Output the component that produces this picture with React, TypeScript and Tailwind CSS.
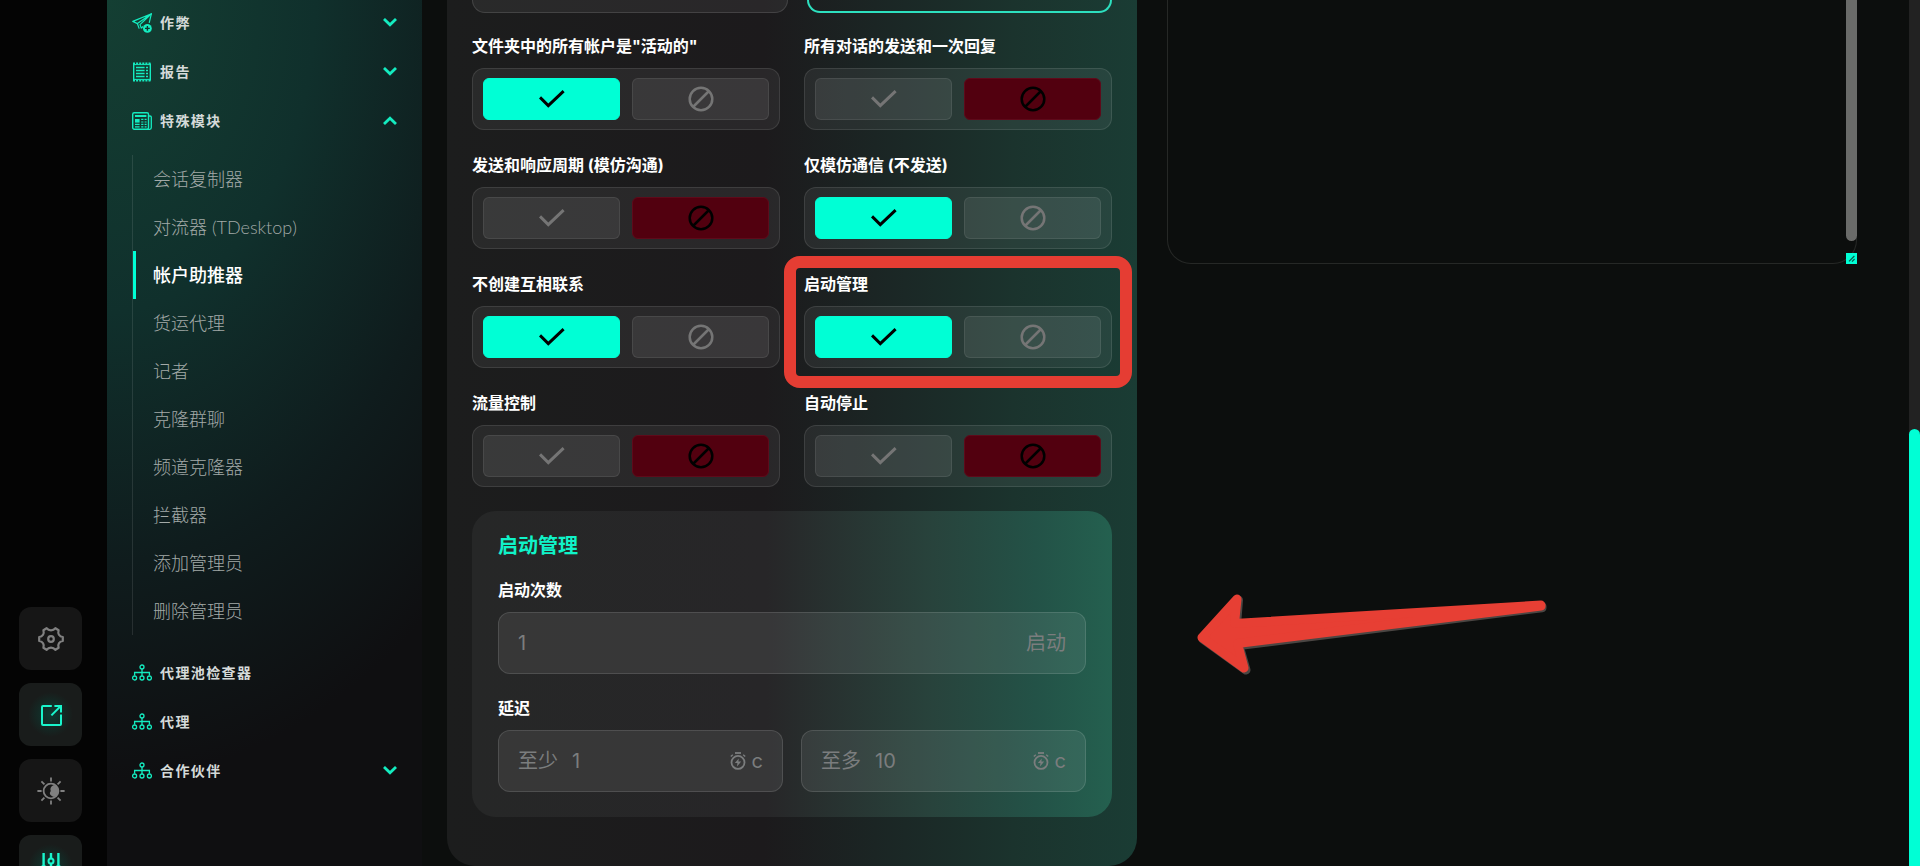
import { useState, type ReactNode } from 'react';
import clsx from 'clsx';

type IconProps = { className?: string };

function PlaneIcon() {
  return (
    <svg className="w-5 h-5" viewBox="0 0 20 20" fill="none" stroke="currentColor" strokeWidth="1.2" strokeLinejoin="round">
      <path d="M19.4 0.7 L0.8 8.4 L5.4 10.6 L19.4 0.7 L8 11.6 L9.4 15.4 M9.4 15.4 L11 13.4" />
      <path d="M19.4 0.7 L17.2 9.8 M5.4 10.6 L7.2 15.6" />
      <circle cx="15.4" cy="15.4" r="4.4" fill="currentColor" stroke="none" />
      <path d="M15.4 13 V17.8 M13 15.4 H17.8" stroke="#10352e" strokeWidth="1.4" />
    </svg>
  );
}

function ReportIcon() {
  return (
    <svg className="w-5 h-5" viewBox="0 0 20 20" fill="none" stroke="currentColor">
      <path d="M1.7 1.5 V18.5 M18.3 1.5 V18.5" strokeWidth="1.4" />
      <path d="M1 1.4 H19 M1 18.6 H19" strokeWidth="1.6" strokeDasharray="2 1.1" />
      <path d="M2 2.6 H18 M2 17.4 H18" strokeWidth="1" />
      <path d="M4 5.5 H12.6 M4 8.5 H12.6 M4 11.5 H12.6 M4 14.5 H12.6" strokeWidth="1.4" />
      <path d="M14 5.5 H16 M14 8.5 H16 M14 11.5 H16 M14 14.5 H16" strokeWidth="1.4" />
    </svg>
  );
}

function NewsIcon() {
  return (
    <svg className="w-5 h-5" viewBox="0 0 20 20" fill="none" stroke="currentColor">
      <rect x="0.7" y="1.7" width="15.8" height="16.6" rx="1.5" strokeWidth="1.4" />
      <path d="M16.5 5 H18 Q19.3 5 19.3 6 V16.6 Q19.3 18.3 17.8 18.3 H15" strokeWidth="1.3" />
      <path d="M3 5 H14.4" strokeWidth="2" />
      <rect x="3" y="8" width="4.6" height="3.6" fill="currentColor" stroke="none" />
      <path d="M9.2 8.4 H11.4 M12.6 8.4 H14.6 M9.2 11 H11.4 M12.6 11 H14.6" strokeWidth="1.2" />
      <path d="M3 13.4 H7.6 M9.2 13.4 H11.4 M12.6 13.4 H14.6 M3 15.8 H7.6 M9.2 15.8 H11.4 M12.6 15.8 H14.6" strokeWidth="1.2" />
    </svg>
  );
}

function ProxyIcon() {
  return (
    <svg className="w-5 h-5" viewBox="0 0 20 20" fill="none" stroke="currentColor" strokeWidth="1.3">
      <circle cx="10" cy="4" r="2" />
      <circle cx="2.6" cy="15" r="2" />
      <circle cx="10" cy="15" r="2" />
      <circle cx="17.4" cy="15" r="2" />
      <path d="M10 6 V13 M2.6 12.4 V9.5 H17.4 V12.4" />
    </svg>
  );
}

function Chevron({ up }: { up?: boolean }) {
  return (
    <svg className={clsx('w-[14px] h-[9px]', up && 'rotate-180')} viewBox="0 0 14 9" fill="none" stroke="currentColor" strokeWidth="2.8">
      <path d="M1 1 L7 6.8 L13 1" />
    </svg>
  );
}

function CheckIcon({ className }: IconProps) {
  return (
    <svg className={clsx('w-[26px] h-[18px]', className)} viewBox="0 0 26 18" fill="none" stroke="currentColor" strokeWidth="3">
      <path d="M1 7.4 L9.3 15.6 L24.6 1.2" />
    </svg>
  );
}

function BanIcon({ className }: IconProps) {
  return (
    <svg className={clsx('w-[26px] h-[26px]', className)} viewBox="0 0 26 26" fill="none" stroke="currentColor" strokeWidth="2.5">
      <circle cx="13" cy="13" r="11.3" />
      <path d="M5 21 L21 5" />
    </svg>
  );
}

function StopwatchIcon() {
  return (
    <svg className="w-4 h-[18px]" viewBox="0 0 16 18" fill="none" stroke="currentColor">
      <circle cx="8" cy="10.4" r="6.5" strokeWidth="1.8" />
      <path d="M5 1 H11" strokeWidth="1.8" />
      <path d="M0.8 4.6 L2.8 2.8 M15.2 4.6 L13.2 2.8" strokeWidth="1.4" />
      <path d="M8.8 6.4 L4.8 11 H7.4 L7 14.4 L11.2 9.6 H8.4 Z" fill="currentColor" stroke="none" />
    </svg>
  );
}

function GearIcon() {
  return (
    <svg className="w-[26px] h-[26px]" viewBox="0 0 26 26" fill="none" stroke="currentColor" strokeWidth="2.2" strokeLinejoin="round">
      <path d="M8.6 2.2 Q10.2 4.4 13 4.4 Q15.8 4.4 17.4 2.2 L20.6 4.2 Q19.8 7 21 8.8 Q22.2 10.8 24.8 11 V15 Q22.2 15.2 21 17.2 Q19.8 19 20.6 21.8 L17.4 23.8 Q15.8 21.6 13 21.6 Q10.2 21.6 8.6 23.8 L5.4 21.8 Q6.2 19 5 17.2 Q3.8 15.2 1.2 15 V11 Q3.8 10.8 5 8.8 Q6.2 7 5.4 4.2 Z" />
      <circle cx="13" cy="13" r="2.8" />
    </svg>
  );
}

function ShareIcon() {
  return (
    <svg className="w-[22px] h-[22px]" viewBox="0 0 22 22" fill="none" stroke="currentColor" strokeWidth="2">
      <path d="M11.8 2 H3 Q2 2 2 3 V20 Q2 21 3 21 H20 Q21 21 21 20 V10.6" />
      <path d="M11.4 11.4 L20 2.8 M14.4 2 H21 V8.4" />
    </svg>
  );
}

function ThemeIcon() {
  return (
    <svg className="w-7 h-7" viewBox="0 0 28 28" fill="none" stroke="currentColor" strokeWidth="1.8">
      <circle cx="14" cy="14" r="7.4" />
      <path d="M17 8 A6.4 6.4 0 0 1 17 20 Q12.8 18.6 12.8 16 Q14.4 14 13.4 12.2 Q13.4 9.6 17 8 Z" fill="currentColor" stroke="none" />
      <path d="M14 0.4 V4.6 M14 23.4 V27.6 M0.4 14 H4.6 M23.4 14 H27.6 M4.4 4.4 L7.4 7.4 M20.6 20.6 L23.6 23.6 M4.4 23.6 L7.4 20.6 M20.6 7.4 L23.6 4.4" />
    </svg>
  );
}

function SlidersIcon() {
  return (
    <svg className="w-5 h-7" viewBox="0 0 20 28" fill="none" stroke="currentColor" strokeWidth="2.4">
      <path d="M2.6 0 V13 M10 0 V5 M17.4 0 V13 M2.6 19 V28 M10 11 V28 M17.4 19 V28" />
      <circle cx="10" cy="8" r="2.5" strokeWidth="2" />
      <circle cx="2.6" cy="15" r="2" strokeWidth="2" />
      <circle cx="17.4" cy="15" r="2" strokeWidth="2" />
    </svg>
  );
}

const railButtons = [
  { label: '设置', icon: <GearIcon />, active: false },
  { label: '打开', icon: <ShareIcon />, active: true },
  { label: '主题', icon: <ThemeIcon />, active: false },
  { label: '调整', icon: <SlidersIcon />, active: true },
];

const subItems = [
  '会话复制器',
  '对流器 (TDesktop)',
  '帐户助推器',
  '货运代理',
  '记者',
  '克隆群聊',
  '频道克隆器',
  '拦截器',
  '添加管理员',
  '删除管理员',
];

const options = [
  { label: '文件夹中的所有帐户是"活动的"', on: true },
  { label: '所有对话的发送和一次回复', on: false },
  { label: '发送和响应周期 (模仿沟通)', on: false },
  { label: '仅模仿通信 (不发送)', on: true },
  { label: '不创建互相联系', on: true },
  { label: '启动管理', on: true, highlight: true },
  { label: '流量控制', on: false },
  { label: '自动停止', on: false },
];

function Group({ icon, label, arrow }: { icon: ReactNode; label: string; arrow?: 'up' | 'down' }) {
  return (
    <button className="flex w-full h-[49px] items-center gap-2 pl-[25px] pr-[25px] text-[#14ecc0]">
      {icon}
      <span className="text-sm font-bold tracking-widest text-[#d5dad9]">{label}</span>
      {arrow && (
        <span className="ml-auto">
          <Chevron up={arrow === 'up'} />
        </span>
      )}
    </button>
  );
}

function Toggle({ label, on, highlight }: { label: string; on: boolean; highlight?: boolean }) {
  const [value, setValue] = useState(on);
  const base = 'flex flex-1 h-[42px] items-center justify-center rounded-md border';
  const off = 'bg-white/8 border-white/8 text-[#757575]';

  return (
    <div className="relative" role="group" aria-label={label}>
      <div className="text-base leading-6 font-bold text-white">{label}</div>
      <div className="mt-[10px] flex gap-3 rounded-xl border border-white/10 bg-white/6 px-[10px] py-[9px]">
        <button
          aria-label="是"
          aria-pressed={value}
          onClick={() => setValue(true)}
          className={clsx(base, value ? 'bg-[#00ffd5] border-[#00ffd5] text-black' : off)}
        >
          <CheckIcon />
        </button>
        <button
          aria-label="否"
          aria-pressed={!value}
          onClick={() => setValue(false)}
          className={clsx(base, value ? off : 'bg-[#52000f] border-[#5e0a1a] text-black')}
        >
          <BanIcon />
        </button>
      </div>
      {highlight && (
        <div className="pointer-events-none absolute z-10 -inset-x-5 -top-4 -bottom-5 rounded-2xl border-[12px] border-[#e53d33]" />
      )}
    </div>
  );
}

function Field({ id, prefix, placeholder, children }: { id: string; prefix?: string; placeholder: string; children: ReactNode }) {
  return (
    <div className="flex h-[62px] min-w-0 flex-1 items-center rounded-xl border border-white/12 bg-white/8 px-[19px] text-xl text-[#7b7d7e]">
      {prefix && (
        <label htmlFor={id} className="mr-[14px] shrink-0">
          {prefix}
        </label>
      )}
      <input
        id={id}
        placeholder={placeholder}
        className="min-w-0 flex-1 bg-transparent outline-none placeholder:text-[#7b7d7e]"
      />
      {children}
    </div>
  );
}

export default function App() {
  const [active, setActive] = useState('帐户助推器');

  return (
    <div className="flex h-screen overflow-hidden bg-[#0c0e0d] font-['Inter','Noto_Sans_CJK_SC',sans-serif] text-white">
      {/* Icon rail */}
      <aside className="flex w-[107px] shrink-0 flex-col justify-end bg-[#040404]">
        <div className="-mb-8 flex flex-col gap-[13px] pl-[19px]">
          {railButtons.map((b) => (
            <button
              key={b.label}
              aria-label={b.label}
              className={clsx(
                'flex w-[63px] h-[63px] items-center justify-center rounded-xl',
                b.active
                  ? 'bg-[radial-gradient(circle_at_center,#0d3b32_0%,#191c1b_50%)] text-[#19f5cc]'
                  : 'bg-[#161616] text-[#808080]'
              )}
            >
              {b.icon}
            </button>
          ))}
        </div>
      </aside>

      {/* Sidebar */}
      <nav className="w-[315px] shrink-0 bg-[#0f0f11] bg-[radial-gradient(ellipse_520px_780px_at_0%_0%,#143f33_0%,#10302c_40%,#0f1c1d_72%,#0f0f11_100%)]">
        <div className="-mt-0.5">
          <Group icon={<PlaneIcon />} label="作弊" arrow="down" />
          <Group icon={<ReportIcon />} label="报告" arrow="down" />
          <Group icon={<NewsIcon />} label="特殊模块" arrow="up" />
          <ul className="mt-[10px] mb-[13px] ml-[25px] border-l border-white/10 font-['Lato','Noto_Sans_CJK_SC',sans-serif]">
            {subItems.map((item) => (
              <li key={item}>
                <a
                  href="#"
                  onClick={() => setActive(item)}
                  className={clsx(
                    'flex h-12 items-center border-l-[3px] pl-[17px] text-lg',
                    item === active ? 'border-[#00ffd5] font-medium text-white' : 'border-transparent font-light text-[#a3aaa8]'
                  )}
                >
                  {item}
                </a>
              </li>
            ))}
          </ul>
          <Group icon={<ProxyIcon />} label="代理池检查器" />
          <Group icon={<ProxyIcon />} label="代理" />
          <Group icon={<ProxyIcon />} label="合作伙伴" arrow="down" />
        </div>
      </nav>

      <main className="grid flex-1 grid-cols-2 items-start gap-[30px] pl-[25px] pr-[52px]">
        {/* Settings panel */}
        <section className="rounded-b-[28px] bg-[linear-gradient(90deg,#1c1d1d_0%,#1c1a1c_46%,#1b2524_62%,#1b332d_82%,#1a3c34_100%)] px-[25px] pb-[49px]">
          <div className="grid grid-cols-[316fr_305fr] gap-[19px]">
            <div className="h-[13px] rounded-b-2xl border border-t-0 border-white/12 bg-white/6" />
            <div className="h-[13px] rounded-b-2xl border-2 border-t-0 border-[#2de0bf]" />
          </div>

          <div className="mt-[21px] grid grid-cols-2 gap-x-6 gap-y-[23px]">
            {options.map((o) => (
              <Toggle key={o.label} {...o} />
            ))}
          </div>

          <div className="mt-6 rounded-3xl bg-[linear-gradient(90deg,#262727_0%,#272628_46%,#28433c_72%,#235247_88%,#24604f_100%)] px-[26px] pt-[21px] pb-[25px]">
            <h3 className="text-xl leading-7 font-bold text-[#10f3c8]">启动管理</h3>
            <label htmlFor="runs" className="mt-[18px] block text-base leading-6 font-bold">
              启动次数
            </label>
            <div className="mt-[10px] flex">
              <Field id="runs" placeholder="1">
                <span>启动</span>
              </Field>
            </div>
            <label htmlFor="delay-min" className="mt-[22px] block text-base leading-6 font-bold">
              延迟
            </label>
            <div className="mt-[10px] flex gap-[18px]">
              <Field id="delay-min" prefix="至少" placeholder="1">
                <StopwatchIcon />
                <span className="ml-[6px]">c</span>
              </Field>
              <Field id="delay-max" prefix="至多" placeholder="10">
                <StopwatchIcon />
                <span className="ml-[6px]">c</span>
              </Field>
            </div>
          </div>
        </section>

        {/* Log output */}
        <section className="relative">
          <textarea
            aria-label="日志"
            className="block h-[264px] w-full resize-none rounded-b-3xl border border-t-0 border-[#262826] bg-transparent outline-none"
          />
          <div className="absolute top-0 right-0 h-[241px] w-[11px] rounded-b-full bg-[#6a6b69]" />
          <div className="absolute right-0 bottom-0 flex h-[11px] w-[11px] items-center justify-center bg-[#00ffd5]">
            <svg className="w-[7px] h-[7px]" viewBox="0 0 7 7" fill="none" stroke="#0a5a4c" strokeWidth="1.2">
              <path d="M1 6.4 L6.4 1 M4 6.6 L6.6 4" />
            </svg>
          </div>
          <svg
            className="pointer-events-none absolute top-[593px] left-[29px] w-[352px] h-[84px]"
            viewBox="0 0 352 84"
          >
            <path
              d="M7 46 L42.5 7 L40.5 32 L346 13.3 L346 14.7 L43 52.5 L50 77 Z"
              fill="#8a7f7a"
              stroke="#8a7f7a"
              strokeWidth="9"
              strokeLinejoin="round"
              opacity="0.5"
            />
            <path
              d="M6 44.5 L41 6 L38.5 30.5 L345 12 L345 13 L41.5 50.5 L48 75 Z"
              fill="#e73f34"
              stroke="#e73f34"
              strokeWidth="9"
              strokeLinejoin="round"
            />
          </svg>
        </section>
      </main>

      {/* Page scrollbar */}
      <div className="flex w-[11px] shrink-0 flex-col justify-end bg-[#222]">
        <div className="h-[437px] rounded-t-full bg-[#00ffd5]" />
      </div>
    </div>
  );
}
